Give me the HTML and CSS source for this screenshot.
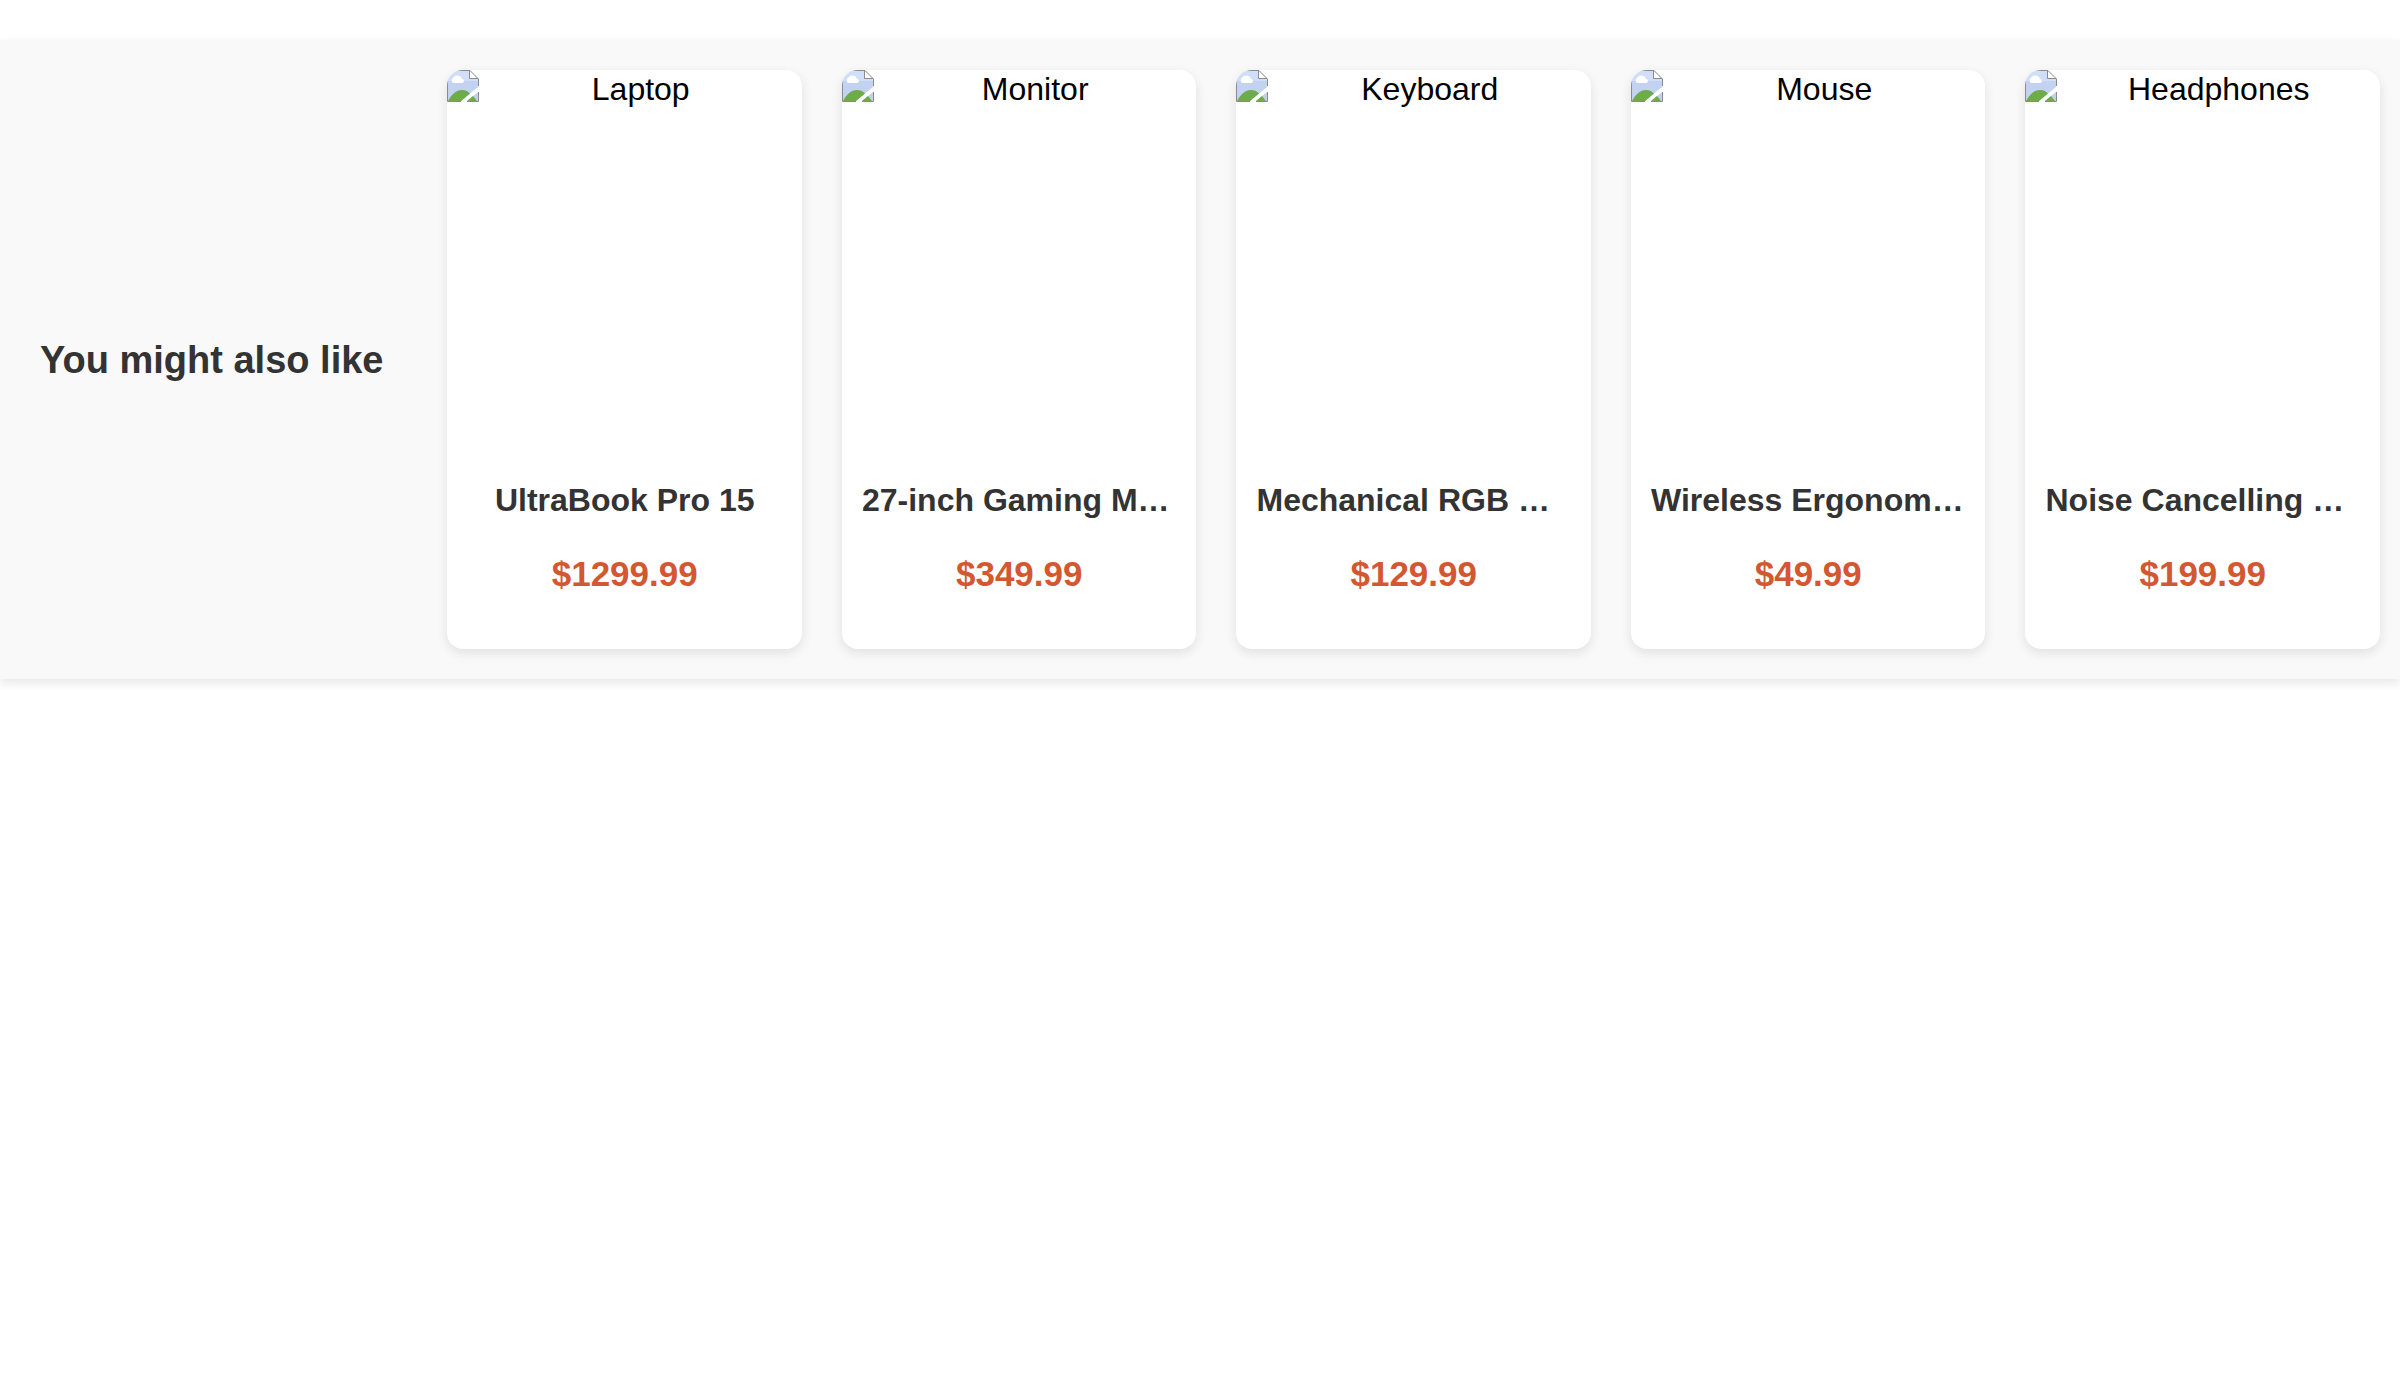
FILE: index.html
```html
<!DOCTYPE html>
<html lang="en">
<head>
<meta charset="utf-8">
<meta name="viewport" content="width=device-width, initial-scale=1">
<title>You might also like</title>
<link rel="stylesheet" href="styles.css">
</head>
<body>
<svg class="symbols" aria-hidden="true">
  <symbol id="missing" viewBox="0 0 32 32">
    <path d="M1 1H23L31 9V17L14 31H1Z" fill="#c3d2f0"/>
    <path d="M1 1H23L31 9V11H1Z" fill="#d0def9"/>
    <path d="M6 13a3 3 0 0 1 0-5C7 5 14 4 15 9a2 2 0 0 1 0 4Z" fill="#fff"/>
    <path d="M1 31C5 24 9 20 15 20c3 0 6 1 8 3.500L14 31Z" fill="#6eab49"/>
    <path d="M20 31L31 22V31Z" fill="#c2d0ec"/>
    <path d="M20 31L26 26L30 31Z" fill="#6eab49"/>
    <path d="M23 1V9H31Z" fill="#fff"/>
    <path d="M14 31.500H.5V.5H23L31.500 9V16M22.500 1V8.500H31M20 31.500H31.500V22" fill="none" stroke="#8b8b8b"/>
  </symbol>
</svg>
<section class="recommendations">
  <h2 class="heading">You might also like</h2>
  <ul class="products">
    <li class="card">
      <div class="picture"><svg class="icon" aria-hidden="true"><use href="#missing"/></svg><span class="alt">Laptop</span></div>
      <h3 class="name">UltraBook Pro 15</h3>
      <p class="price">$1299.99</p>
    </li>
    <li class="card">
      <div class="picture"><svg class="icon" aria-hidden="true"><use href="#missing"/></svg><span class="alt">Monitor</span></div>
      <h3 class="name">27-inch Gaming Monitor</h3>
      <p class="price">$349.99</p>
    </li>
    <li class="card">
      <div class="picture"><svg class="icon" aria-hidden="true"><use href="#missing"/></svg><span class="alt">Keyboard</span></div>
      <h3 class="name">Mechanical RGB Keyboard</h3>
      <p class="price">$129.99</p>
    </li>
    <li class="card">
      <div class="picture"><svg class="icon" aria-hidden="true"><use href="#missing"/></svg><span class="alt">Mouse</span></div>
      <h3 class="name">Wireless Ergonomic Mouse</h3>
      <p class="price">$49.99</p>
    </li>
    <li class="card">
      <div class="picture"><svg class="icon" aria-hidden="true"><use href="#missing"/></svg><span class="alt">Headphones</span></div>
      <h3 class="name">Noise Cancelling Headphones</h3>
      <p class="price">$199.99</p>
    </li>
  </ul>
</section>
</body>
</html>
```
FILE: styles.css
```css
* {
  box-sizing: border-box;
}

body {
  margin: 0;
  background: #fff;
  color: #000;
  font-family: "Liberation Sans", Arial, sans-serif;
  font-size: 32px;
}

.symbols {
  display: none;
}

.recommendations {
  display: flex;
  align-items: center;
  gap: 40px;
  margin: 40px 0;
  padding: 30px 20px;
  background: #f9f9f9;
  box-shadow: 0 4px 10px rgba(0, 0, 0, 0.1);
}

.heading {
  flex: none;
  margin: 0;
  padding: 0 24px 0 20px;
  color: #333;
  font-size: 38px;
  line-height: 44px;
  white-space: nowrap;
}

.products {
  display: grid;
  flex: 1;
  grid-template-columns: repeat(5, minmax(0, 1fr));
  gap: 40px;
  margin: 0;
  padding: 0;
  list-style: none;
}

.card {
  overflow: hidden;
  padding-bottom: 55px;
  border-radius: 16px;
  background: #fff;
  box-shadow: 0 4px 12px rgba(0, 0, 0, 0.1);
  text-align: center;
}

.picture {
  display: flex;
  height: 400px;
}

.icon {
  flex: none;
  width: 32px;
  height: 32px;
}

.alt {
  flex: 1;
  line-height: 38px;
}

.name {
  overflow: hidden;
  margin: 12px 20px 36px;
  color: #333;
  font-size: 32px;
  line-height: 36px;
  text-overflow: ellipsis;
  white-space: nowrap;
}

.price {
  margin: 0 20px;
  color: #d35832;
  font-size: 35px;
  font-weight: bold;
  line-height: 40px;
}
```
